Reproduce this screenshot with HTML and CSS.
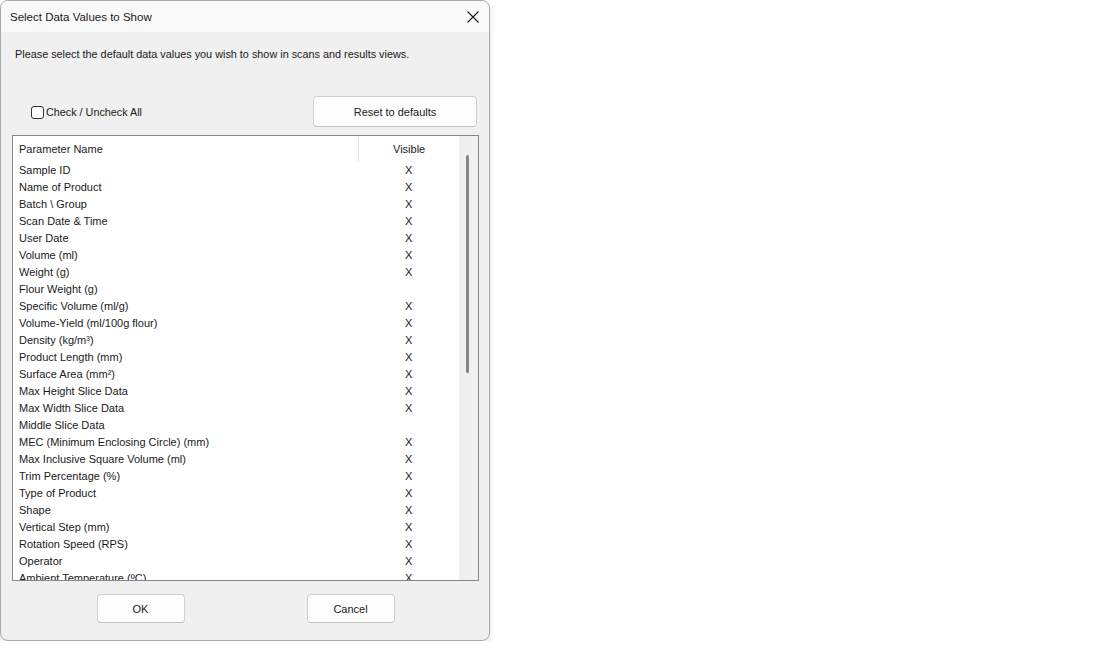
FILE: index.html
```html
<!DOCTYPE html>
<html>
  <head>
    <title>Select Data Values to Show</title>
    <link rel="stylesheet" href="styles.css">
  </head>
  <body>
    <div class="dialog">
      <div class="titlebar">
        <span class="title">Select Data Values to Show</span>
        <span class="close">
          <svg width="12" height="12" viewBox="0 0 12 12"><path d="M0.5 0.5 L11.5 11.5 M11.5 0.5 L0.5 11.5" stroke="#1a1a1a" stroke-width="1.1" fill="none"/></svg>
        </span>
      </div>
      <div class="content">
        <p class="intro">Please select the default data values you wish to show in scans and results views.</p>
        <div class="toolbar">
          <label class="checkall"><span class="box"></span>Check / Uncheck All</label>
          <div class="btn reset">Reset to defaults</div>
        </div>
        <div class="list">
          <div class="list-main">
            <div class="list-head">
              <div class="col-name">Parameter Name</div>
              <div class="col-vis">Visible</div>
            </div>
            <div class="rows">
              <div class="row"><div class="col-name">Sample ID</div><div class="col-vis">X</div></div>
              <div class="row"><div class="col-name">Name of Product</div><div class="col-vis">X</div></div>
              <div class="row"><div class="col-name">Batch \ Group</div><div class="col-vis">X</div></div>
              <div class="row"><div class="col-name">Scan Date &amp; Time</div><div class="col-vis">X</div></div>
              <div class="row"><div class="col-name">User Date</div><div class="col-vis">X</div></div>
              <div class="row"><div class="col-name">Volume (ml)</div><div class="col-vis">X</div></div>
              <div class="row"><div class="col-name">Weight (g)</div><div class="col-vis">X</div></div>
              <div class="row"><div class="col-name">Flour Weight (g)</div><div class="col-vis"></div></div>
              <div class="row"><div class="col-name">Specific Volume (ml/g)</div><div class="col-vis">X</div></div>
              <div class="row"><div class="col-name">Volume-Yield (ml/100g flour)</div><div class="col-vis">X</div></div>
              <div class="row"><div class="col-name">Density (kg/m³)</div><div class="col-vis">X</div></div>
              <div class="row"><div class="col-name">Product Length (mm)</div><div class="col-vis">X</div></div>
              <div class="row"><div class="col-name">Surface Area (mm²)</div><div class="col-vis">X</div></div>
              <div class="row"><div class="col-name">Max Height Slice Data</div><div class="col-vis">X</div></div>
              <div class="row"><div class="col-name">Max Width Slice Data</div><div class="col-vis">X</div></div>
              <div class="row"><div class="col-name">Middle Slice Data</div><div class="col-vis"></div></div>
              <div class="row"><div class="col-name">MEC (Minimum Enclosing Circle) (mm)</div><div class="col-vis">X</div></div>
              <div class="row"><div class="col-name">Max Inclusive Square Volume (ml)</div><div class="col-vis">X</div></div>
              <div class="row"><div class="col-name">Trim Percentage (%)</div><div class="col-vis">X</div></div>
              <div class="row"><div class="col-name">Type of Product</div><div class="col-vis">X</div></div>
              <div class="row"><div class="col-name">Shape</div><div class="col-vis">X</div></div>
              <div class="row"><div class="col-name">Vertical Step (mm)</div><div class="col-vis">X</div></div>
              <div class="row"><div class="col-name">Rotation Speed (RPS)</div><div class="col-vis">X</div></div>
              <div class="row"><div class="col-name">Operator</div><div class="col-vis">X</div></div>
              <div class="row"><div class="col-name">Ambient Temperature (ºC)</div><div class="col-vis">X</div></div>
            </div>
          </div>
          <div class="scrollbar"><div class="thumb"></div></div>
        </div>
        <div class="footer">
          <div class="btn">OK</div>
          <div class="btn">Cancel</div>
        </div>
      </div>
    </div>
  </body>
</html>
```

FILE: styles.css
```css
* { margin: 0; padding: 0; box-sizing: border-box; }
body {
  background: #fff;
  font-family: "Liberation Sans", Arial, sans-serif;
  font-size: 11px;
  color: #1a1a1a;
}

.dialog {
  width: 490px;
  height: 641px;
  border: 1px solid #a9a9a9;
  border-radius: 8px;
  background: #f0f0f0;
  box-shadow: 0 2px 6px rgba(0, 0, 0, 0.12);
  overflow: hidden;
  display: flex;
  flex-direction: column;
}

.titlebar {
  height: 31px;
  background: #f9f9f9;
  display: flex;
  align-items: center;
  justify-content: space-between;
  padding: 0 9px 0 9px;
}
.title {
  font-size: 11.5px;
}
.close {
  display: flex;
  margin-right: 1px;
}

.content {
  flex: 1;
  display: flex;
  flex-direction: column;
  padding: 0 10px 0 11px;
}

.intro {
  margin-top: 15px;
  padding-left: 3px;
  font-size: 10.85px;
  line-height: 14px;
}

.toolbar {
  margin-top: 35px;
  display: flex;
  justify-content: space-between;
  align-items: center;
}
.checkall {
  display: flex;
  align-items: center;
  margin-left: 19px;
  margin-top: 1px;
  font-size: 10.8px;
}
.box {
  width: 13px;
  height: 13px;
  border: 1px solid #333;
  border-radius: 3px;
  background: #fff;
  margin-right: 2px;
}

.btn {
  background: #fdfdfd;
  border: 1px solid #d0d0d0;
  border-bottom-color: #c2c2c2;
  border-radius: 4px;
  display: flex;
  align-items: center;
  justify-content: center;
  height: 29px;
  width: 88px;
}
.reset {
  width: 164px;
  height: 31px;
  margin-right: 2px;
}

.list {
  margin-top: 8px;
  height: 446px;
  border: 1px solid #828790;
  background: #fff;
  display: flex;
  overflow: hidden;
}
.list-main {
  flex: 1;
  overflow: hidden;
}
.list-head {
  display: flex;
  height: 26px;
  align-items: center;
}
.list-head .col-vis {
  border-left: 1px solid #e5e5e5;
  height: 100%;
  display: flex;
  align-items: center;
  justify-content: center;
}
.row {
  display: flex;
  height: 17px;
  line-height: 17px;
}
.col-name {
  width: 346px;
  padding-left: 6px;
  white-space: nowrap;
}
.col-vis {
  width: 101px;
  text-align: center;
}
.scrollbar {
  width: 19px;
  background: #f0f0f0;
  position: relative;
}
.thumb {
  position: absolute;
  left: 7px;
  top: 19px;
  width: 3px;
  height: 218px;
  border-radius: 2px;
  background: #858585;
}

.footer {
  display: flex;
  justify-content: center;
  gap: 122px;
  margin-top: 13px;
}
```
